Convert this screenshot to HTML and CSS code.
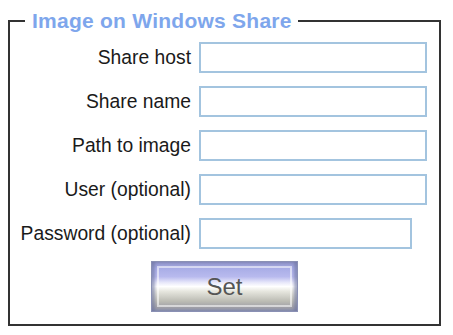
FILE: index.html
```html
<!DOCTYPE html>
<html>
<head>
<meta charset="utf-8">
<link rel="stylesheet" href="styles.css">
</head>
<body>
<fieldset class="panel">
  <legend class="panel-title">Image on Windows Share</legend>
  <div class="form">
    <label class="label">Share host</label><input class="field" type="text">
    <label class="label">Share name</label><input class="field" type="text">
    <label class="label">Path to image</label><input class="field" type="text">
    <label class="label">User (optional)</label><input class="field" type="text">
    <label class="label">Password (optional)</label><input class="field field-short" type="password">
  </div>
  <div class="actions">
    <button class="btn" type="button"><span class="btn-inner">Set</span></button>
  </div>
</fieldset>
</body>
</html>
```
FILE: styles.css
```css
html, body {
  background: #ffffff;
}
body {
  margin: 8px;
  font-family: "Liberation Sans", Arial, sans-serif;
}
.panel {
  margin: 0;
  padding: 0 0 12px 0;
  width: 433px;
  box-sizing: border-box;
  height: 318px;
  border: 2px solid #333333;
}
.panel-title {
  margin-left: 15px;
  padding: 0 6px 0 7px;
  font-weight: bold;
  font-size: 21px;
  letter-spacing: 0.25px;
  line-height: 26px;
  color: #7ea6ec;
}
.form {
  display: grid;
  grid-template-columns: 181px auto;
  column-gap: 8px;
  row-gap: 13px;
  padding-top: 8px;
  align-items: center;
}
.label {
  text-align: right;
  font-size: 19.3px;
  color: #1a1a1a;
  white-space: nowrap;
}
.field {
  box-sizing: border-box;
  width: 228px;
  height: 31px;
  margin: 0;
  border: 2px solid #a3c4df;
  background: #fff;
}
.field-short {
  width: 213px;
}
.actions {
  display: flex;
  justify-content: center;
  padding-top: 12px;
}
.btn {
  box-sizing: border-box;
  width: 147px;
  height: 51px;
  padding: 4px 5px;
  margin: 0;
  border: 1px solid #8a90b4;
  background: linear-gradient(to bottom, #8c90c4 0%, #a8ace6 12%, #b8baee 30%, #e8e8fa 42%, #ffffff 50%, #e6e6de 60%, #bcbcb4 80%, #9c9ca6 94%, #8890b0 100%);
  box-shadow: inset 4px 0 3px -1px rgba(110,116,160,0.6), inset -4px 0 3px -1px rgba(110,116,160,0.6);
  display: flex;
}
.btn-inner {
  flex: 1;
  display: flex;
  align-items: center;
  justify-content: center;
  border: 2px solid rgba(255,255,255,0.55);
  font-family: "Liberation Sans", Arial, sans-serif;
  font-size: 24px;
  color: #555555;
}
```
